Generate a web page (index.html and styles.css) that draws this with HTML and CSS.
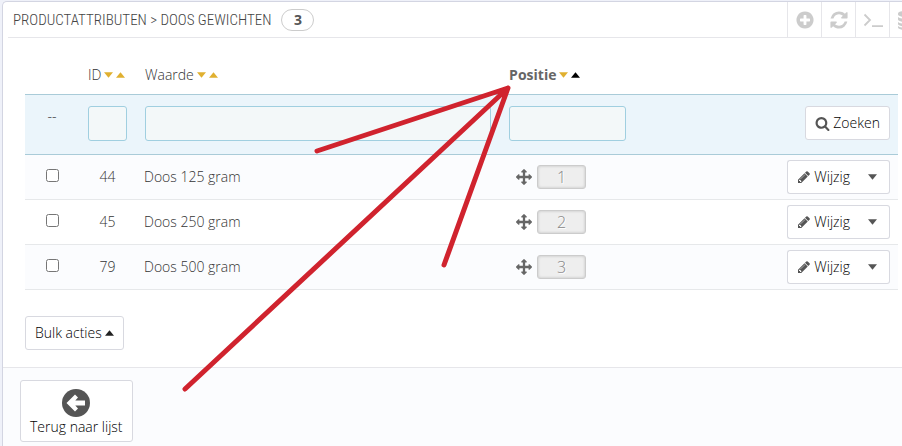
FILE: index.html
```
<!DOCTYPE html>
<html lang="nl">
<head>
    <meta charset="UTF-8">
    <meta name="viewport" content="width=device-width, initial-scale=1.0">
    <title>Productattributen &gt; Doos gewichten</title>
    <link rel="stylesheet" href="styles.css">
</head>
<body>
    <svg class="sprite" aria-hidden="true">
        <symbol id="icon-plus" viewBox="0 0 1792 1792"><path d="M1344 960v-128q0-26-19-45t-45-19h-256v-256q0-26-19-45t-45-19h-128q-26 0-45 19t-19 45v256h-256q-26 0-45 19t-19 45v128q0 26 19 45t45 19h256v256q0 26 19 45t45 19h128q26 0 45-19t19-45v-256h256q26 0 45-19t19-45zm320-64q0 209-103 385.500t-279.500 279.500-385.500 103-385.500-103-279.500-279.500-103-385.500 103-385.500 279.500-279.500 385.500-103 385.500 103 279.500 279.500 103 385.500z"/></symbol>
        <symbol id="icon-refresh" viewBox="0 0 1792 1792"><path d="M1639 1056q0 5-1 7-64 268-268 434.500t-478 166.500q-146 0-282.500-55t-243.500-157l-129 129q-19 19-45 19t-45-19-19-45v-448q0-26 19-45t45-19h448q26 0 45 19t19 45-19 45l-137 137q71 66 161 102t187 36q134 0 250-65t186-179q11-17 53-117 8-23 30-23h192q13 0 22.500 9.500t9.500 22.500zm25-800v448q0 26-19 45t-45 19h-448q-26 0-45-19t-19-45 19-45l138-138q-148-137-349-137-134 0-250 65t-186 179q-11 17-53 117-8 23-30 23h-199q-13 0-22.500-9.500t-9.500-22.500v-7q65-268 270-434.500t480-166.500q146 0 284 55.500t245 156.500l130-129q19-19 45-19t45 19 19 45z"/></symbol>
        <symbol id="icon-terminal" viewBox="0 0 20 20"><path d="M1.500 4.500l5.500 5.500-5.500 5.500M9 16.200h11" fill="none" stroke="currentColor" stroke-width="1.800"/></symbol>
        <symbol id="icon-database" viewBox="0 0 20 20"><path d="M1 3.500C1 0 19 0 19 3.500v1C19 8 1 8 1 4.500zM1 7c3 2.600 15 2.600 18 0v2.500C19 13 1 13 1 9.500zM1 12c3 2.600 15 2.600 18 0v2C19 17.500 1 17.500 1 14zM1 16c3 2.600 15 2.600 18 0v1.500c0 3.500-18 3.500-18 0z"/></symbol>
        <symbol id="icon-search" viewBox="0 0 1792 1792"><path d="M1216 832q0-185-131.500-316.500t-316.500-131.500-316.500 131.500-131.500 316.500 131.500 316.500 316.500 131.500 316.500-131.500 131.500-316.500zm512 832q0 52-38 90t-90 38q-54 0-90-38l-343-342q-179 124-399 124-143 0-273.500-55.500t-225-150-150-225-55.500-273.500 55.500-273.500 150-225 225-150 273.500-55.500 273.500 55.500 225 150 150 225 55.500 273.500q0 220-124 399l343 343q37 37 37 90z"/></symbol>
        <symbol id="icon-pencil" viewBox="0 0 1792 1792"><path d="M491 1536l91-91-235-235-91 91v107h128v128h107zm523-928q0-22-22-22-10 0-17 7l-542 542q-7 7-7 17 0 22 22 22 10 0 17-7l542-542q7-7 7-17zm-54-192l416 416-832 832h-416v-416zm683 96q0 53-37 90l-166 166-416-416 166-165q36-38 90-38 53 0 91 38l235 234q37 39 37 91z"/></symbol>
        <symbol id="icon-move" viewBox="0 0 1792 1792"><path d="M1792 896q0 26-19 45l-256 256q-19 19-45 19t-45-19-19-45v-128h-384v384h128q26 0 45 19t19 45-19 45l-256 256q-19 19-45 19t-45-19l-256-256q-19-19-19-45t19-45 45-19h128v-384h-384v128q0 26-19 45t-45 19-45-19l-256-256q-19-19-19-45t19-45l256-256q19-19 45-19t45 19 19 45v128h384v-384h-128q-26 0-45-19t-19-45 19-45l256-256q19-19 45-19t45 19l256 256q19 19 19 45t-19 45-45 19h-128v384h384v-128q0-26 19-45t45-19 45 19l256 256q19 19 19 45z"/></symbol>
        <symbol id="icon-back" viewBox="0 0 28 28"><circle cx="14" cy="14" r="14"/><path d="M4.500 14l8.500-8.500 3 3L13.300 11.500H23v5h-9.700L16 19.500l-3 3z" fill="#fff"/></symbol>
        <symbol id="icon-down" viewBox="0 0 10 6"><path d="M0 0h10L5 6z"/></symbol>
        <symbol id="icon-up" viewBox="0 0 10 6"><path d="M0 6h10L5 0z"/></symbol>
    </svg>

    <div class="panel">
        <header class="panel-heading">
            <h1>PRODUCTATTRIBUTEN &gt; DOOS GEWICHTEN</h1>
            <span class="badge">3</span>
            <div class="tools">
                <a href="#" aria-label="Toevoegen"><svg><use href="#icon-plus"/></svg></a>
                <a href="#" aria-label="Vernieuwen"><svg><use href="#icon-refresh"/></svg></a>
                <a href="#" aria-label="SQL query"><svg><use href="#icon-terminal"/></svg></a>
                <a href="#" aria-label="SQL Manager"><svg><use href="#icon-database"/></svg></a>
            </div>
        </header>

        <form class="panel-body">
            <table>
                <colgroup>
                    <col class="col-check">
                    <col class="col-id">
                    <col>
                    <col class="col-position">
                    <col class="col-actions">
                </colgroup>
                <thead>
                    <tr class="titles">
                        <th></th>
                        <th><span class="sort">ID <a href="#" aria-label="ID aflopend"><svg><use href="#icon-down"/></svg></a><a href="#" aria-label="ID oplopend"><svg><use href="#icon-up"/></svg></a></span></th>
                        <th><span class="sort">Waarde <a href="#" aria-label="Waarde aflopend"><svg><use href="#icon-down"/></svg></a><a href="#" aria-label="Waarde oplopend"><svg><use href="#icon-up"/></svg></a></span></th>
                        <th class="sorted"><span class="sort">Positie <a href="#" aria-label="Positie aflopend"><svg><use href="#icon-down"/></svg></a><a href="#" class="active" aria-label="Positie oplopend"><svg><use href="#icon-up"/></svg></a></span></th>
                        <th></th>
                    </tr>
                    <tr class="filters">
                        <td class="center">--</td>
                        <td><input type="text" aria-label="ID"></td>
                        <td><input type="text" aria-label="Waarde"></td>
                        <td><input type="text" class="short" aria-label="Positie"></td>
                        <td><button type="button" class="btn btn-search"><svg><use href="#icon-search"/></svg>Zoeken</button></td>
                    </tr>
                </thead>
                <tbody>
                    <tr>
                        <td class="center"><input type="checkbox" aria-label="Doos 125 gram"></td>
                        <td class="center">44</td>
                        <td>Doos 125 gram</td>
                        <td><div class="drag"><svg><use href="#icon-move"/></svg><span class="position">1</span></div></td>
                        <td><div class="btn-group"><button type="button" class="btn"><svg><use href="#icon-pencil"/></svg>Wijzig</button><button type="button" class="btn toggle" aria-label="Meer acties"><svg class="caret"><use href="#icon-down"/></svg></button></div></td>
                    </tr>
                    <tr>
                        <td class="center"><input type="checkbox" aria-label="Doos 250 gram"></td>
                        <td class="center">45</td>
                        <td>Doos 250 gram</td>
                        <td><div class="drag"><svg><use href="#icon-move"/></svg><span class="position">2</span></div></td>
                        <td><div class="btn-group"><button type="button" class="btn"><svg><use href="#icon-pencil"/></svg>Wijzig</button><button type="button" class="btn toggle" aria-label="Meer acties"><svg class="caret"><use href="#icon-down"/></svg></button></div></td>
                    </tr>
                    <tr>
                        <td class="center"><input type="checkbox" aria-label="Doos 500 gram"></td>
                        <td class="center">79</td>
                        <td>Doos 500 gram</td>
                        <td><div class="drag"><svg><use href="#icon-move"/></svg><span class="position">3</span></div></td>
                        <td><div class="btn-group"><button type="button" class="btn"><svg><use href="#icon-pencil"/></svg>Wijzig</button><button type="button" class="btn toggle" aria-label="Meer acties"><svg class="caret"><use href="#icon-down"/></svg></button></div></td>
                    </tr>
                </tbody>
            </table>
            <button type="button" class="btn bulk">Bulk acties<svg class="caret"><use href="#icon-up"/></svg></button>
        </form>

        <footer class="panel-footer">
            <a href="#" class="btn back"><svg><use href="#icon-back"/></svg>Terug naar lijst</a>
        </footer>
    </div>

    <!-- red marker lines pointing at the Positie column -->
    <svg class="marker" width="902" height="446" aria-hidden="true">
        <path d="M317 151L508 88L185 389M508 88L444 265"/>
    </svg>
</body>
</html>
```
FILE: styles.css
```
* {
    box-sizing: border-box;
}

body {
    margin: 0;
    padding: 1px 0 0 2px;
    min-height: 100vh;
    display: flex;
    position: relative;
    overflow: hidden;
    background-color: #eff1f9;
    color: #333;
    font: 300 14px/20px "Open Sans", "Noto Sans", sans-serif;
}

svg {
    display: block;
    flex: none;
    fill: currentColor;
}

.sprite {
    position: absolute;
    width: 0;
    height: 0;
}

.panel {
    flex: 1;
    min-width: 0;
    display: flex;
    flex-direction: column;
    background-color: #fff;
    border: 1px solid #d3d5e2;
    border-width: 1px 0 0 1px;
    border-radius: 5px 0 0 0;
}

.panel-heading {
    display: flex;
    align-items: center;
    height: 36px;
    margin-left: 5px;
    padding-left: 5px;
    border-bottom: 1px solid #e6e6ea;
}

h1 {
    margin: 0;
    color: #444;
    font: 300 15px/20px "Ubuntu Condensed", "Roboto Condensed", sans-serif;
    white-space: nowrap;
}

.badge {
    width: 33px;
    margin-left: 10px;
    border: 1px solid #ccc;
    border-radius: 11px;
    color: #555;
    font-weight: bold;
    text-align: center;
}

.tools {
    display: flex;
    flex: 0 0 115px;
    align-self: stretch;
    margin-left: auto;
    overflow: hidden;
    color: #ccc;
}

.tools a {
    display: flex;
    flex: 0 0 34px;
    align-items: center;
    justify-content: center;
    border-left: 1px solid #e6e6ea;
    color: inherit;
}

.tools svg {
    width: 20px;
    height: 20px;
}

.panel-body {
    padding: 18px 4px 17px 22px;
}

table {
    width: 100%;
    table-layout: fixed;
    border-collapse: separate;
    border-spacing: 0;
}

.col-check {
    width: 54px;
}

.col-id {
    width: 57px;
}

.col-position {
    width: 136px;
}

.col-actions {
    width: 30%;
}

th,
td {
    padding: 0 8px;
    text-align: left;
    font-weight: inherit;
}

.titles th {
    height: 39px;
    padding: 0 9px;
    border-bottom: 1px solid #a9cbd8;
}

.titles .sorted {
    color: #666;
    font-weight: bold;
}

.sort {
    display: flex;
    align-items: center;
    gap: 3px;
}

.sort a {
    color: #e0b030;
}

.sort a.active {
    color: #000;
}

.sort svg,
.caret {
    width: 9px;
    height: 6px;
}

.filters td {
    height: 60px;
    padding: 11px 9px 0;
    vertical-align: top;
    background-color: #ebf5fb;
    border-bottom: 1px solid #a9cbd8;
}

.filters td:last-child {
    padding-right: 8px;
}

.filters input {
    display: block;
    width: 100%;
    height: 35px;
    border: 1px solid #a0cfe0;
    border-radius: 3px;
    background-color: #f3f8f9;
}

.filters .short {
    width: 117px;
}

tbody td {
    height: 45px;
    border-bottom: 1px solid #e6e8ea;
}

tbody tr:nth-child(odd) td {
    background-color: #fbfcfe;
}

.center,
.filters .center {
    text-align: center;
}

input[type="checkbox"] {
    display: block;
    margin: 0 auto 4px;
}

.drag {
    display: flex;
    align-items: center;
    gap: 5px;
    padding-left: 8px;
    color: #666;
}

.drag svg {
    width: 16px;
    height: 16px;
}

.position {
    width: 49px;
    height: 24px;
    border: 1px solid #ccc;
    border-radius: 3px;
    background-color: #eee;
    box-shadow: inset 0 0 3px rgba(0, 0, 0, 0.2);
    color: #888;
    font-size: 16px;
    line-height: 22px;
    text-align: center;
    text-shadow: 1px 1px #fff;
}

.btn {
    display: flex;
    align-items: center;
    gap: 3px;
    height: 34px;
    padding: 0 9px;
    border: 1px solid #d8d9e0;
    border-radius: 3px;
    background-color: #fff;
    color: #000;
    font: inherit;
    text-decoration: none;
    white-space: nowrap;
    cursor: pointer;
}

.btn svg {
    color: #555;
}

.btn-search {
    margin-left: auto;
}

.btn-search svg {
    width: 15px;
    height: 15px;
}

.btn-group {
    display: flex;
    justify-content: flex-end;
}

.btn-group .btn {
    border-right: 0;
    border-radius: 3px 0 0 3px;
}

.btn-group .btn svg:not(.caret) {
    width: 14px;
    height: 14px;
}

.btn-group .toggle {
    padding: 0 12px 0 9px;
    border-left: 0;
    border-right: 1px solid #d8d9e0;
    border-radius: 0 3px 3px 0;
}

.bulk {
    margin-top: 26px;
}

.bulk .caret {
    color: #222;
}

.panel-footer {
    flex: 1;
    padding: 12px 17px 4px;
    border-top: 1px solid #e6e6ea;
    background-color: #fbfcfe;
}

.back {
    display: inline-flex;
    flex-direction: column;
    gap: 0;
    height: auto;
    padding: 8px 9px 4px;
}

.back svg {
    width: 28px;
    height: 28px;
}

.marker {
    position: absolute;
    top: 0;
    left: 0;
    pointer-events: none;
}

.marker path {
    fill: none;
    stroke: #d0232e;
    stroke-width: 5;
    stroke-linecap: round;
    stroke-linejoin: round;
}
```
